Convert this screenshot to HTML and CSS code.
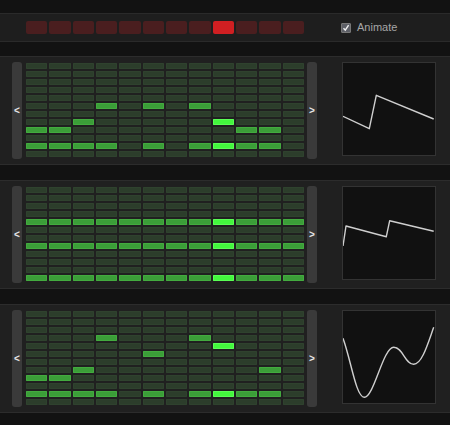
FILE: index.html
```html
<!DOCTYPE html>
<html>
<head>
<meta charset="utf-8">
<link rel="stylesheet" href="styles.css">
</head>
<body>
<div class="topbar">
  <div class="steps" id="steps"></div>
  <label class="animate">
    <span class="checkbox"><svg width="8" height="8" viewBox="0 0 8 8"><path d="M1.5 4.2 L3.3 6.2 L6.6 1.2" fill="none" stroke="#f0f0f0" stroke-width="1.4"/></svg></span>
    <span class="label-text">Animate</span>
  </label>
</div>

<div class="panel">
  <div class="nav">&lt;</div>
  <div class="grid" data-pattern="8,10|8,10|7,10|5,10||5,10||5,10|7,10|8,10|8,10|"></div>
  <div class="nav">&gt;</div>
  <div class="wave">
    <svg width="92" height="92" viewBox="1 1 92 92"><polyline points="1,54.3 27.3,66.7 34.3,33.3 91.7,57" fill="none" stroke="#cfcfcf" stroke-width="1.4" stroke-linejoin="round"/></svg>
  </div>
</div>

<div class="panel">
  <div class="nav">&lt;</div>
  <div class="grid" data-pattern="4,7,11|4,7,11|4,7,11|4,7,11|4,7,11|4,7,11|4,7,11|4,7,11|4,7,11|4,7,11|4,7,11|4,7,11"></div>
  <div class="nav">&gt;</div>
  <div class="wave">
    <svg width="92" height="92" viewBox="1 1 92 92"><polyline points="1,60 4,40 44.3,50.7 47.7,34.7 91.7,45.3" fill="none" stroke="#cfcfcf" stroke-width="1.4" stroke-linejoin="round"/></svg>
  </div>
</div>

<div class="panel">
  <div class="nav">&lt;</div>
  <div class="grid" data-pattern="8,10|8,10|7,10|3,10||5,10||3,10|4,10|10|7,10|"></div>
  <div class="nav">&gt;</div>
  <div class="wave">
    <svg width="92" height="92" viewBox="1 1 92 92"><path d="M1,28.3 C9,50 14,87.3 22.3,87.3 C32,87.3 41,37.3 51.7,37.3 C61,37.3 63,54.3 71.7,54.3 C80,54.3 86,33 91.7,17.3" fill="none" stroke="#cfcfcf" stroke-width="1.4"/></svg>
  </div>
</div>

<script src="script.js"></script>
</body>
</html>
```

FILE: styles.css
```css
html, body {
  margin: 0;
  padding: 0;
  background: #121212;
  width: 450px;
  height: 425px;
  overflow: hidden;
  font-family: "Liberation Sans", Arial, sans-serif;
}

.topbar {
  margin-top: 13px;
  border-top: 1px solid #2a2a2a;
  border-bottom: 1px solid #2a2a2a;
  background: #1e1e1e;
  padding: 7px 0;
  display: flex;
  align-items: center;
}

.steps {
  margin-left: 26px;
  width: 278px;
  display: grid;
  grid-template-columns: repeat(12, 1fr);
  column-gap: 2px;
}

.step {
  height: 13px;
  border-radius: 2px;
  background: #4a1e1f;
}

.step.on {
  background: #d01f22;
}

.animate {
  margin-left: 37px;
  display: flex;
  align-items: center;
  gap: 6px;
}

.checkbox {
  width: 10px;
  height: 10px;
  box-sizing: border-box;
  background: #5d5f66;
  border: 1px solid #777;
  border-radius: 1px;
  display: flex;
  align-items: center;
  justify-content: center;
}

.label-text {
  font-size: 11px;
  color: #a6a6a6;
  line-height: 13px;
}

.panel {
  margin-top: 14px;
  border-top: 1px solid #2c2c2c;
  border-bottom: 1px solid #2c2c2c;
  background: #202020;
  padding: 5px 0;
  display: flex;
  align-items: flex-start;
}

.panel + .panel {
  margin-top: 15px;
}

.nav {
  width: 10px;
  height: 97px;
  margin-left: 12px;
  background: #3a3a3a;
  border-radius: 3px;
  color: #e6e6e6;
  font-size: 10px;
  font-weight: bold;
  display: flex;
  align-items: center;
  justify-content: center;
  line-height: 1;
}

.grid + .nav {
  margin-left: 3px;
}

.grid {
  margin-left: 4px;
  margin-top: 1px;
  width: 278px;
  height: 94px;
  display: grid;
  grid-template-columns: repeat(12, 1fr);
  grid-template-rows: repeat(12, 6px);
  gap: 2px;
}

.cell {
  background: #2c3d2b;
  border-radius: 1px;
  box-shadow: inset 0 0 0 1px #2f422e;
}

.cell.on {
  background: #3b9e38;
  box-shadow: inset 0 0 0 1px #43ab3f;
}

.cell.on.now {
  background: #43f83d;
  box-shadow: inset 0 0 0 1px #5aff55;
}

.wave {
  margin-left: 25px;
  width: 94px;
  height: 94px;
  box-sizing: border-box;
  border: 1px solid #333;
  background: #111;
}

.wave svg {
  display: block;
}
```

FILE: script.js
```js
var steps = document.getElementById('steps');
for (var i = 0; i < 12; i++) {
  var s = document.createElement('div');
  s.className = 'step' + (i === 8 ? ' on' : '');
  steps.appendChild(s);
}
var grids = document.querySelectorAll('.grid');
grids.forEach(function (g) {
  var cols = g.getAttribute('data-pattern').split('|').map(function (c) {
    return c === '' ? [] : c.split(',').map(Number);
  });
  for (var r = 0; r < 12; r++) {
    for (var c = 0; c < 12; c++) {
      var d = document.createElement('div');
      var on = cols[c] && cols[c].indexOf(r) >= 0;
      d.className = 'cell' + (on ? ' on' : '') + (on && c === 8 ? ' now' : '');
      g.appendChild(d);
    }
  }
});
```
